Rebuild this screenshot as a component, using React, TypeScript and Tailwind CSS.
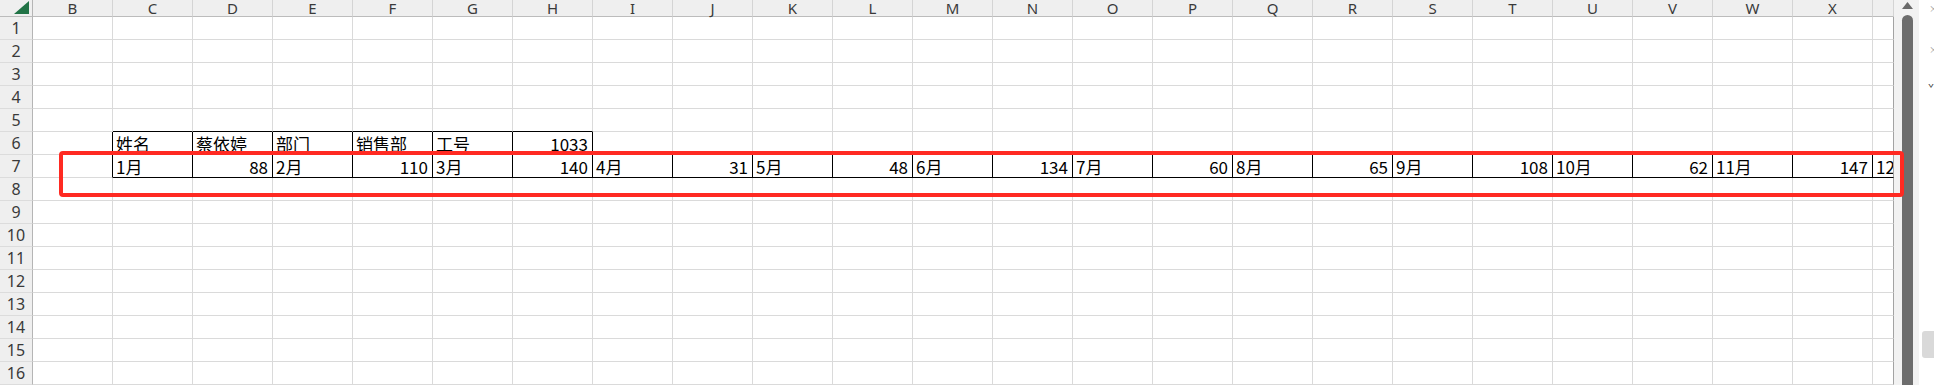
import React from 'react';

const cols = ['B', 'C', 'D', 'E', 'F', 'G', 'H', 'I', 'J', 'K', 'L', 'M', 'N', 'O', 'P', 'Q', 'R', 'S', 'T', 'U', 'V', 'W', 'X', ''];
const rows = Array.from({ length: 16 }, (_, i) => i + 1);

// cell contents keyed by "row-colIndex" (B = 0)
const cells: Record<string, { text: string; right?: boolean }> = {
  '6-1': { text: '姓名' },
  '6-2': { text: '蔡依婷' },
  '6-3': { text: '部门' },
  '6-4': { text: '销售部' },
  '6-5': { text: '工号' },
  '6-6': { text: '1033', right: true },
};

const months = [88, 110, 140, 31, 48, 134, 60, 65, 108, 62, 147];
months.forEach((v, i) => {
  cells[`7-${1 + i * 2}`] = { text: `${i + 1}月` };
  cells[`7-${2 + i * 2}`] = { text: String(v), right: true };
});
cells['7-23'] = { text: '12月' };

const bordered = (r: number, c: number) =>
  (r === 6 && c >= 1 && c <= 6) || (r === 7 && c >= 1 && c <= 23);

function Cell({ r, c }: { r: number; c: number }) {
  const data = cells[`${r}-${c}`];
  const last = c === cols.length - 1;
  const rightBlack = bordered(r, c) || bordered(r, c + 1);
  const bottomBlack = bordered(r, c) || bordered(r + 1, c);
  return (
    <div
      className={
        'flex items-end overflow-hidden whitespace-nowrap border-r border-b px-[3px] text-[17px] leading-[21px] text-black ' +
        (last ? 'border-r-[#a3a3a3] ' : rightBlack ? 'border-r-black ' : 'border-r-[#dadada] ') +
        (bottomBlack ? 'border-b-black ' : 'border-b-[#dadada] ') +
        (data?.right ? 'justify-end pr-[4px]' : 'justify-start')
      }
    >
      {data?.text}
    </div>
  );
}

export default function App() {
  return (
    <div
      className="relative flex h-[385px] w-[1934px] overflow-hidden bg-white"
      style={{ fontFamily: "'Noto Sans CJK SC', 'Noto Sans', sans-serif" }}
    >
      <div className="grid w-[1894px] shrink-0 grid-cols-[33px_repeat(23,80px)_21px] grid-rows-[17px_repeat(16,23px)]">
        {/* corner */}
        <div className="flex items-end justify-end border-r border-b border-r-[#b5b5b5] border-b-[#bcbcbc] bg-[#efefef] pr-[3px] pb-[2px]">
          <svg width="15" height="13" viewBox="0 0 15 13">
            <polygon points="15,0 15,13 0,13" fill="#217346" />
          </svg>
        </div>
        {cols.map((c, i) => (
          <div
            key={i}
            className="flex items-center justify-center border-r border-b border-r-[#d4d4d4] border-b-[#bcbcbc] bg-[#efefef] text-[15px] leading-[16px] text-[#3a3a3a]"
            style={{ fontFamily: "'Noto Sans', sans-serif" }}
          >
            {c}
          </div>
        ))}
        {rows.map((r) => (
          <React.Fragment key={r}>
            <div
              className="flex items-center justify-center border-r border-b border-r-[#b5b5b5] border-b-[#dcdcdc] bg-[#efefef] text-[16px] leading-[20px] text-[#3a3a3a]"
              style={{ fontFamily: "'Noto Sans', sans-serif" }}
            >
              {r}
            </div>
            {cols.map((_, ci) => (
              <Cell key={ci} r={r} c={ci} />
            ))}
          </React.Fragment>
        ))}
      </div>

      {/* vertical scrollbar */}
      <div className="flex w-[25px] shrink-0 flex-col bg-[#f2f2f2] pt-[2px] pl-[8px]">
        <svg width="11" height="7" viewBox="0 0 11 7">
          <polygon points="5.5,0 11,7 0,7" fill="#6b6b6b" />
        </svg>
        <div className="mt-[6px] w-[11px] flex-1 rounded-t-full bg-[#6d6d6d]" />
      </div>

      {/* clipped side panel */}
      <div className="flex w-[15px] shrink-0 flex-col overflow-hidden bg-white">
        <span className="mt-[4px] ml-[10px] text-[9px] leading-[9px] text-[#9a9a9a]">×</span>
        <span className="mt-[32px] ml-[10px] text-[9px] leading-[9px] text-[#9a9a9a]">×</span>
        <span className="mt-[30px] ml-[9px] text-[10px] leading-[10px] text-[#333]">ˇ</span>
        <div className="mt-auto mb-[27px] ml-[3px] h-[27px] rounded-l-[3px] bg-[#d9d9d9]" />
      </div>

      {/* red annotation box */}
      <div className="pointer-events-none absolute top-[151px] left-[59px] h-[46px] w-[1845px] rounded-[4px] border-4 border-[#ff2a22]" />
    </div>
  );
}
